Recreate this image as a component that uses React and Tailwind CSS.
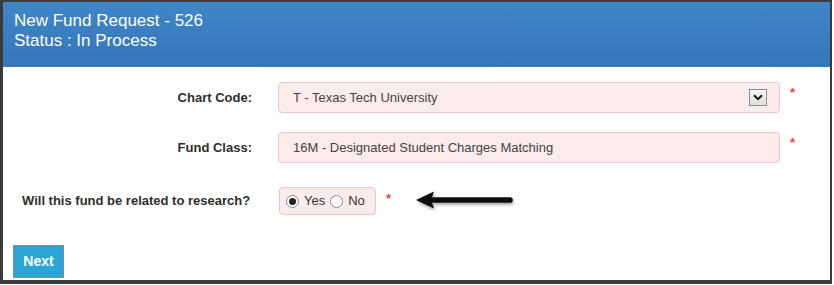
import React, { useState } from 'react';

const Asterisk = () => (
    <span className="text-[#e8474a] text-[13px] leading-none font-bold">*</span>
);

const Radio = ({ checked, onClick }) => (
    <span
        onClick={onClick}
        className="w-[13px] h-[13px] rounded-full border border-[#8a8a8a] bg-white flex items-center justify-center cursor-pointer"
    >
        {checked && <span className="w-[7px] h-[7px] rounded-full bg-[#222]" />}
    </span>
);

const App = () => {
    const [research, setResearch] = useState('yes');

    return (
        <div className="w-[834px] h-[285px] bg-white" style={{ fontFamily: '"Liberation Sans", Arial, sans-serif' }}>
            <div className="w-[832px] h-[284px] border-[#3a3a3a] border-t-2 border-l-[3px] border-r-2 border-b-[4px] flex flex-col">
                {/* Header */}
                <div className="h-[65px] bg-gradient-to-b from-[#3f86c8] to-[#3577b8] px-[11px] pt-[9px] text-white text-[17px] leading-[20px]">
                    <div>New Fund Request - 526</div>
                    <div>Status : In Process</div>
                </div>

                {/* Form */}
                <div className="flex-1 relative">
                    <div className="flex items-center mt-[15px] h-[31px]">
                        <label className="w-[249px] text-right text-[13px] font-bold text-[#2e2e2e]">Chart Code:</label>
                        <div className="ml-[26px] w-[502px] h-[31px] bg-[#fcebeb] border border-[#f2c4c6] rounded-[4px] flex items-center justify-between pl-[14px] pr-[12px] text-[13px] text-[#444]">
                            <span>T - Texas Tech University</span>
                            <span className="w-[18px] h-[17px] border border-[#8d8d8d] bg-gradient-to-b from-[#f7f7f7] to-[#dedede] flex items-center justify-center">
                                <svg width="10" height="7" viewBox="0 0 10 7">
                                    <path d="M1 1.2 L5 5.2 L9 1.2" stroke="#111" strokeWidth="2" fill="none" />
                                </svg>
                            </span>
                        </div>
                        <span className="ml-[10px] -mt-[12px]"><Asterisk /></span>
                    </div>

                    <div className="flex items-center mt-[19px] h-[31px]">
                        <label className="w-[249px] text-right text-[13px] font-bold text-[#2e2e2e]">Fund Class:</label>
                        <div className="ml-[26px] w-[502px] h-[31px] bg-[#fcebeb] border border-[#f2c4c6] rounded-[4px] flex items-center pl-[14px] text-[13px] text-[#444]">
                            16M - Designated Student Charges Matching
                        </div>
                        <span className="ml-[10px] -mt-[12px]"><Asterisk /></span>
                    </div>

                    <div className="flex items-center mt-[24px] h-[28px]">
                        <label className="w-[246px] pl-[19px] text-[13px] font-bold text-[#2e2e2e] whitespace-nowrap">Will this fund be related to research?</label>
                        <div className="ml-[30px] w-[97px] h-[28px] bg-[#fcebeb] border border-[#f2c4c6] rounded-[4px] flex items-center pl-[6px] gap-[5px] text-[13px] text-[#333]">
                            <Radio checked={research === 'yes'} onClick={() => setResearch('yes')} />
                            <span>Yes</span>
                            <Radio checked={research === 'no'} onClick={() => setResearch('no')} />
                            <span>No</span>
                        </div>
                        <span className="ml-[10px] -mt-[6px]"><Asterisk /></span>
                        <svg className="ml-[23px] mt-[2px]" width="104" height="24" viewBox="0 0 104 24">
                            <defs>
                                <filter id="sh" x="-10%" y="-50%" width="130%" height="200%">
                                    <feDropShadow dx="1" dy="2" stdDeviation="1.5" floodColor="#000" floodOpacity="0.35" />
                                </filter>
                            </defs>
                            <g filter="url(#sh)">
                                <line x1="16" y1="10" x2="96" y2="10" stroke="#0a0a0a" strokeWidth="5.5" strokeLinecap="round" />
                                <path d="M2 10 L20 1.5 L17 10 L20 18.5 Z" fill="#0a0a0a" />
                            </g>
                        </svg>
                    </div>

                    <button className="absolute left-[10px] bottom-[2px] w-[51px] h-[33px] bg-[#2aa6d6] border border-[#7d8fa0] text-white text-[14px] font-bold">
                        Next
                    </button>
                </div>
            </div>
        </div>
    );
};

export default App;
